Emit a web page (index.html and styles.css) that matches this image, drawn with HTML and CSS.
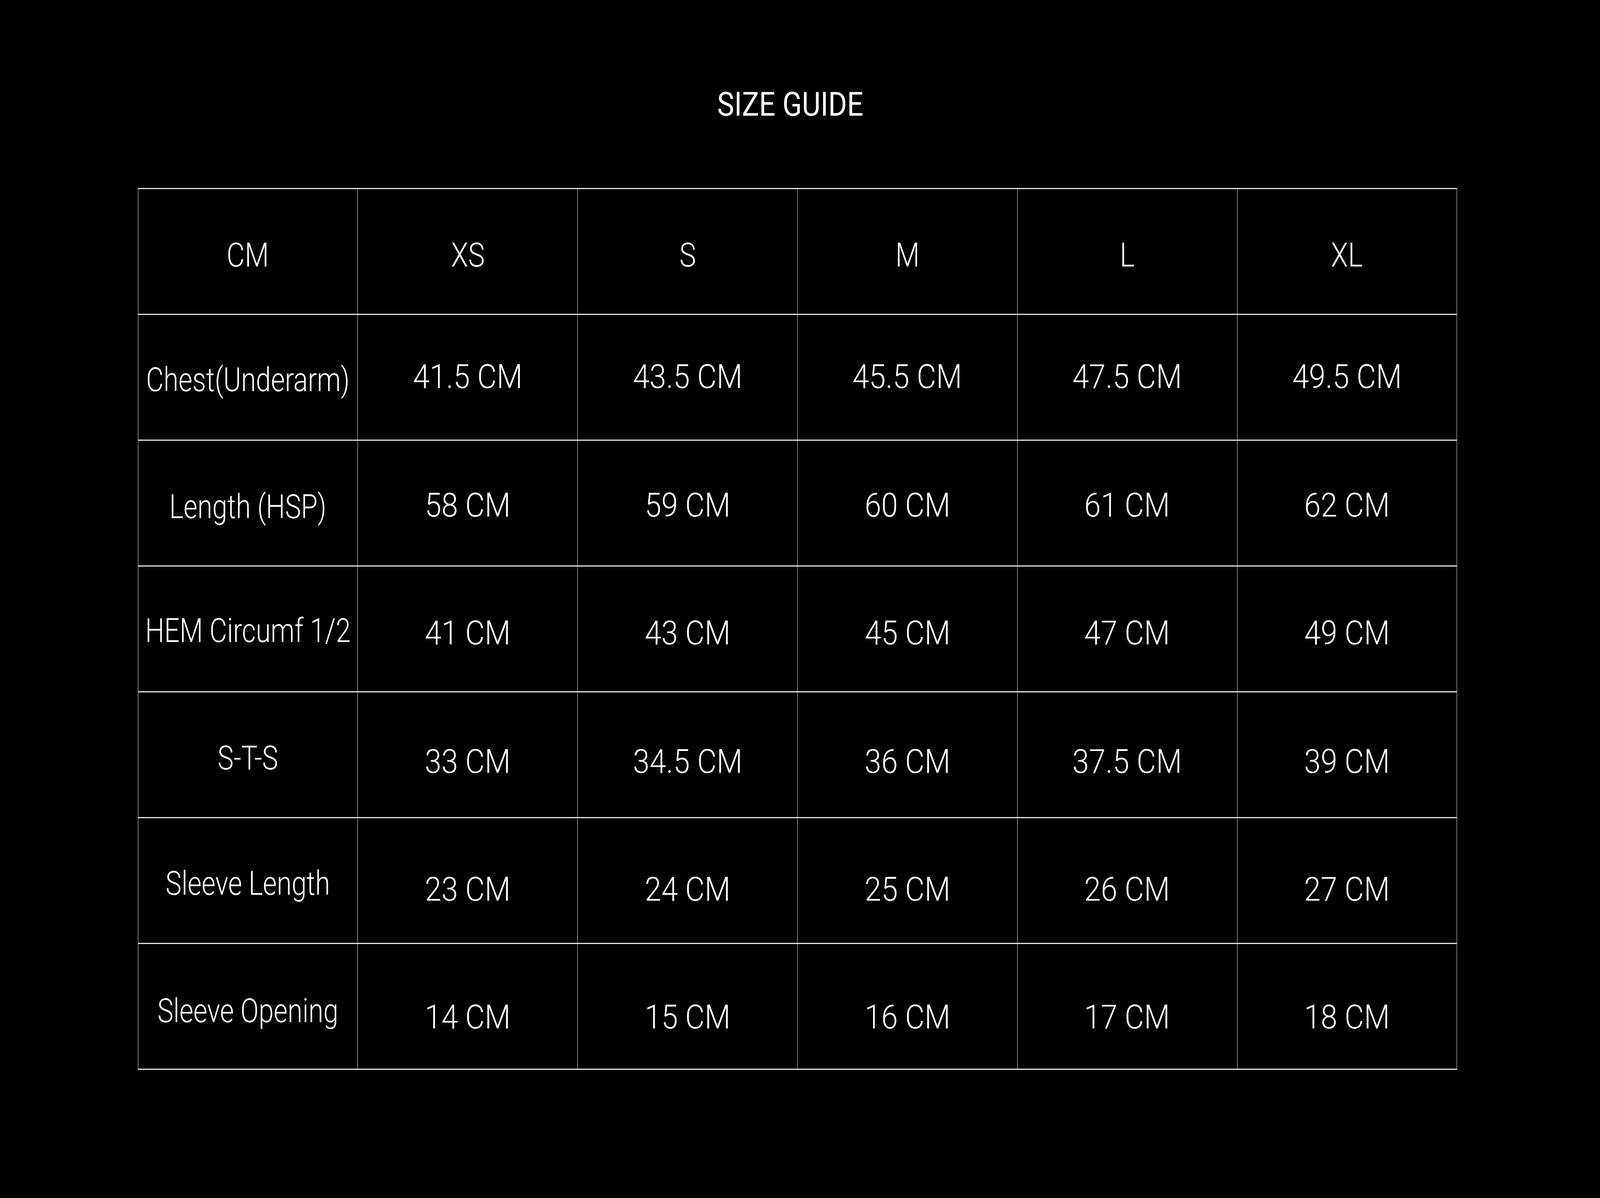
FILE: index.html
```html
<!DOCTYPE html>
<html lang="en">
<head>
<meta charset="utf-8">
<title>Size Guide</title>
<link rel="stylesheet" href="styles.css">
</head>
<body>
<main class="page">
  <h1 class="title"><span class="wide">SIZE GUIDE</span></h1>
  <div class="chart">
    <div class="row head">
      <div class="cell"><span class="wide">CM</span></div>
      <div class="cell"><span class="wide">XS</span></div>
      <div class="cell"><span class="wide">S</span></div>
      <div class="cell"><span class="wide">M</span></div>
      <div class="cell"><span class="wide">L</span></div>
      <div class="cell"><span class="wide">XL</span></div>
    </div>
    <div class="row">
      <div class="cell label"><span class="wide">Chest(Underarm)</span></div>
      <div class="cell"><span class="wide">41.5 CM</span></div>
      <div class="cell"><span class="wide">43.5 CM</span></div>
      <div class="cell"><span class="wide">45.5 CM</span></div>
      <div class="cell"><span class="wide">47.5 CM</span></div>
      <div class="cell"><span class="wide">49.5 CM</span></div>
    </div>
    <div class="row">
      <div class="cell label"><span class="wide">Length (HSP)</span></div>
      <div class="cell"><span class="wide">58 CM</span></div>
      <div class="cell"><span class="wide">59 CM</span></div>
      <div class="cell"><span class="wide">60 CM</span></div>
      <div class="cell"><span class="wide">61 CM</span></div>
      <div class="cell"><span class="wide">62 CM</span></div>
    </div>
    <div class="row">
      <div class="cell label"><span class="wide">HEM Circumf 1/2</span></div>
      <div class="cell"><span class="wide">41 CM</span></div>
      <div class="cell"><span class="wide">43 CM</span></div>
      <div class="cell"><span class="wide">45 CM</span></div>
      <div class="cell"><span class="wide">47 CM</span></div>
      <div class="cell"><span class="wide">49 CM</span></div>
    </div>
    <div class="row">
      <div class="cell label"><span class="wide">S-T-S</span></div>
      <div class="cell"><span class="wide">33 CM</span></div>
      <div class="cell"><span class="wide">34.5 CM</span></div>
      <div class="cell"><span class="wide">36 CM</span></div>
      <div class="cell"><span class="wide">37.5 CM</span></div>
      <div class="cell"><span class="wide">39 CM</span></div>
    </div>
    <div class="row">
      <div class="cell label"><span class="wide">Sleeve Length</span></div>
      <div class="cell"><span class="wide">23 CM</span></div>
      <div class="cell"><span class="wide">24 CM</span></div>
      <div class="cell"><span class="wide">25 CM</span></div>
      <div class="cell"><span class="wide">26 CM</span></div>
      <div class="cell"><span class="wide">27 CM</span></div>
    </div>
    <div class="row">
      <div class="cell label"><span class="wide">Sleeve Opening</span></div>
      <div class="cell"><span class="wide">14 CM</span></div>
      <div class="cell"><span class="wide">15 CM</span></div>
      <div class="cell"><span class="wide">16 CM</span></div>
      <div class="cell"><span class="wide">17 CM</span></div>
      <div class="cell"><span class="wide">18 CM</span></div>
    </div>
  </div>
</main>
</body>
</html>
```

FILE: styles.css
```css
/* Design units: the layout is drawn on a 6991 x 3066 frame.
   --x is one design pixel across, --y one design pixel down. */
:root {
  --x: calc(100vw / 6991);
  --y: calc(100vh / 3066);
  --aspect: 1;
  --line: #e4e4e4;
  background: #000;
}

/* keep the glyph proportions of the design if the frame's aspect differs */
@supports (width: calc(1px * tan(atan2(1px, 1px)))) {
  :root {
    --aspect: calc(tan(atan2(100vw, 100vh)) / 2.2802);
  }
}

html, body {
  margin: 0;
  padding: 0;
  overflow: hidden;
}

body {
  width: 100vw;
  height: 100vh;
  background: #000;
  color: #fff;
  font-family: Roboto, "Liberation Sans", Arial, sans-serif;
}

.page {
  width: calc(5765 * var(--x));
  margin-left: calc(602 * var(--x));
  display: flex;
  flex-direction: column;
}

.wide {
  display: inline-block;
  flex: none;
  white-space: nowrap;
  transform: scaleX(calc(var(--stretch, 1.37) * var(--aspect)));
}

.title {
  margin: 0;
  height: calc(481 * var(--y));
  box-sizing: border-box;
  padding: calc(217 * var(--y)) calc(64 * var(--x)) 0 0;
  text-align: center;
  font-size: calc(85 * var(--y));
  font-weight: 400;
  line-height: calc(100 * var(--y));
  --stretch: 1.47;
}

.chart {
  display: flex;
  flex-direction: column;
  border-top: calc(3 * var(--y)) solid var(--line);
  border-left: calc(3 * var(--x)) solid var(--line);
}

.row {
  display: grid;
  grid-template-columns: repeat(6, minmax(0, 1fr));
  height: calc(322 * var(--y));
  --label-top: 124;
  --value-top: 124;
}

.cell {
  display: flex;
  align-items: flex-start;
  justify-content: center;
  min-width: 0;
  box-sizing: border-box;
  border-right: calc(3 * var(--x)) solid var(--line);
  border-bottom: calc(3 * var(--y)) solid var(--line);
  padding-top: calc(var(--value-top) * var(--y));
  font-size: calc(86 * var(--y));
  font-weight: 300;
  line-height: 1;
  --stretch: 1.52;
}

.cell.label {
  padding-top: calc(var(--label-top) * var(--y));
  --stretch: 1.37;
}

.head .cell {
  --stretch: 1.42;
}

.row:nth-child(1) { --value-top: 126; }
.row:nth-child(2) { --label-top: 123; --value-top: 115; }
.row:nth-child(3) { --label-top: 126; --value-top: 122; }
.row:nth-child(4) { --label-top: 121; --value-top: 127; }
.row:nth-child(5) { --label-top: 125; --value-top: 134; }
.row:nth-child(6) { --label-top: 124; --value-top: 139; }
.row:nth-child(7) { --label-top: 128; --value-top: 144; }
```
